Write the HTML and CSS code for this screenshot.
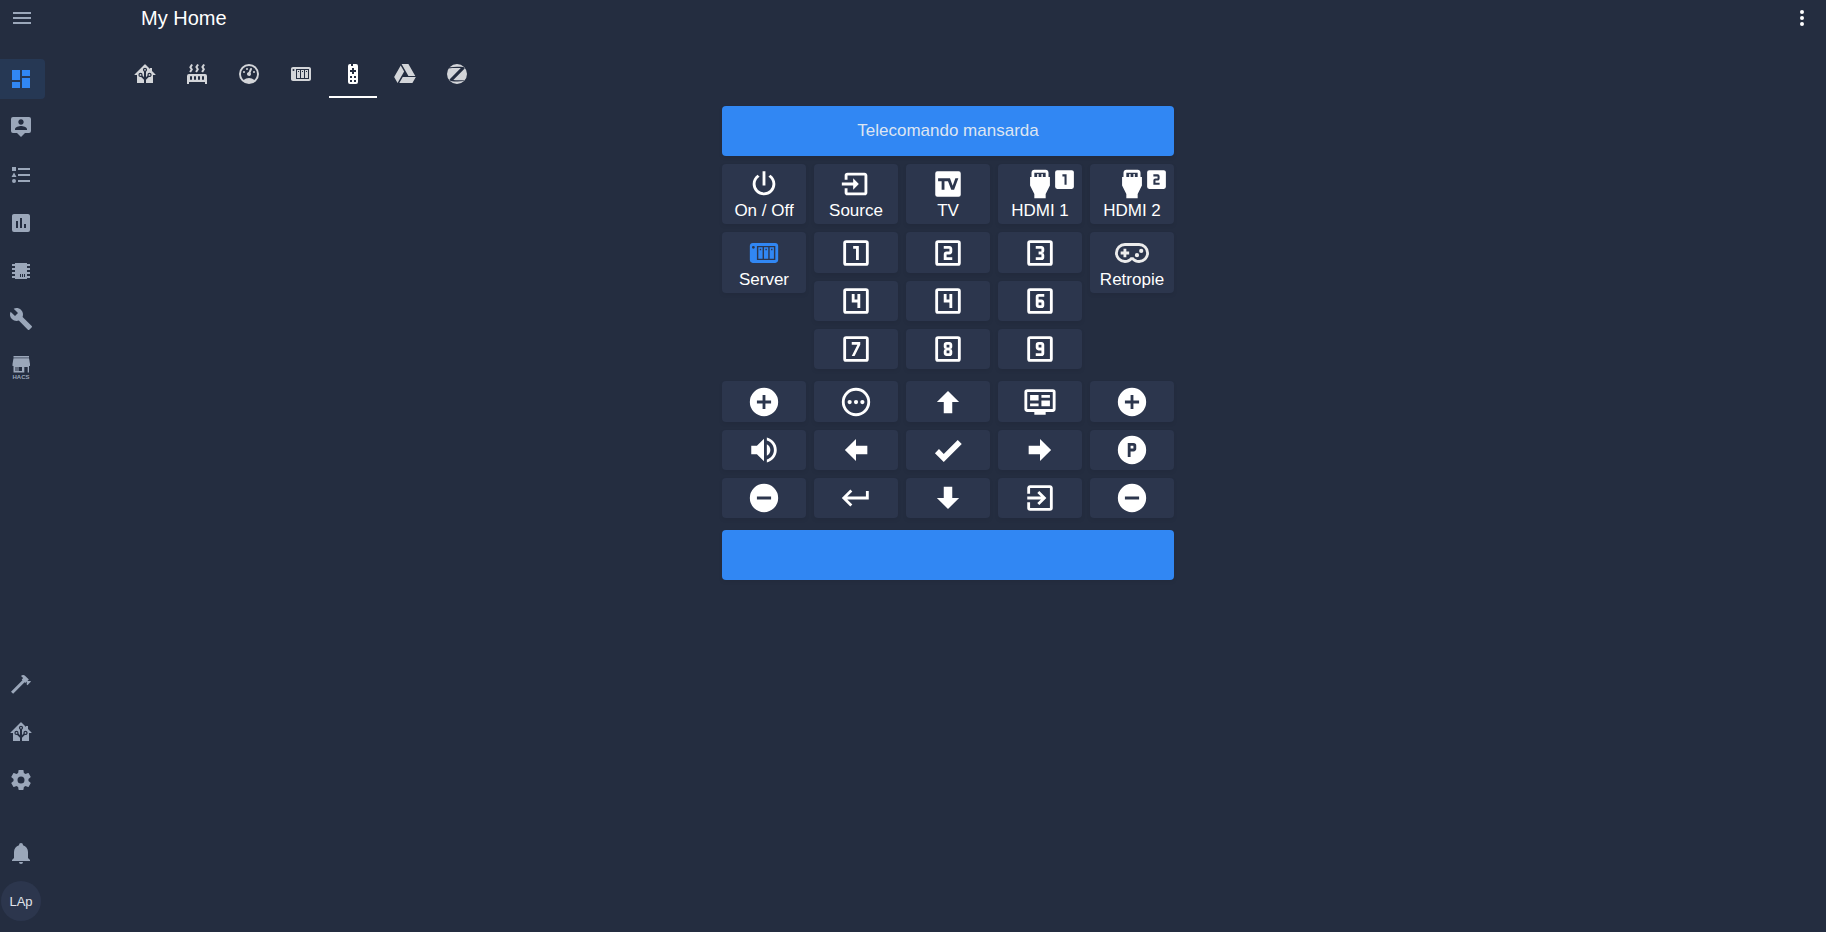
FILE: index.html
```html
<!DOCTYPE html>
<html lang="it">
<head>
<meta charset="utf-8">
<meta name="viewport" content="width=device-width, initial-scale=1">
<title>My Home</title>
<link rel="stylesheet" href="styles.css">
</head>
<body>
<svg class="defs" aria-hidden="true">
<symbol id="menu" viewBox="0 0 24 24"><path d="M3,6H21V8H3V6M3,11H21V13H3V11M3,16H21V18H3V16Z"/></symbol>
<symbol id="dots" viewBox="0 0 24 24"><path d="M12,16A2,2 0 0,1 14,18A2,2 0 0,1 12,20A2,2 0 0,1 10,18A2,2 0 0,1 12,16M12,10A2,2 0 0,1 14,12A2,2 0 0,1 12,14A2,2 0 0,1 10,12A2,2 0 0,1 12,10M12,4A2,2 0 0,1 14,6A2,2 0 0,1 12,8A2,2 0 0,1 10,6A2,2 0 0,1 12,4Z"/></symbol>
<symbol id="dashboard" viewBox="0 0 24 24"><path d="M13,3V9H21V3M13,21H21V11H13M3,21H11V15H3M3,13H11V3H3V13Z"/></symbol>
<symbol id="person" viewBox="0 0 24 24"><path d="M20,2H4A2,2 0 0,0 2,4V16A2,2 0 0,0 4,18H8L12,22L16,18H20A2,2 0 0,0 22,16V4A2,2 0 0,0 20,2M12,4.3C13.5,4.3 14.7,5.5 14.7,7C14.7,8.5 13.5,9.7 12,9.7C10.5,9.7 9.3,8.5 9.3,7C9.3,5.5 10.5,4.3 12,4.3M18,15H6V14.1C6,12.1 10,11 12,11C14,11 18,12.1 18,14.1V15Z"/></symbol>
<symbol id="list" viewBox="0 0 24 24"><path d="M5,9.5L7.5,14H2.5L5,9.5M3,4H7V8H3V4M5,20A2,2 0 0,0 7,18A2,2 0 0,0 5,16A2,2 0 0,0 3,18A2,2 0 0,0 5,20M9,5V7H21V5H9M9,19H21V17H9V19M9,13H21V11H9V13Z"/></symbol>
<symbol id="chart" viewBox="0 0 24 24"><path d="M17,17H15V13H17M13,17H11V7H13M9,17H7V10H9M19,3H5C3.89,3 3,3.89 3,5V19A2,2 0 0,0 5,21H19A2,2 0 0,0 21,19V5C21,3.89 20.1,3 19,3Z"/></symbol>
<symbol id="chip" viewBox="0 0 24 24"><path d="M6,4H18V5H21V7H18V9H21V11H18V13H21V15H18V17H21V19H18V20H6V19H3V17H6V15H3V13H6V11H3V9H6V7H3V5H6V4M11,15V18H12V15H11M13,15V18H14V15H13M15,15V18H16V15H15Z"/></symbol>
<symbol id="wrench" viewBox="0 0 24 24"><path d="M22.7,19L13.6,9.9C14.5,7.6 14,4.9 12.1,3C10.1,1 7.1,0.6 4.7,1.7L9,6L6,9L1.6,4.7C0.4,7.1 0.9,10.1 2.9,12.1C4.8,14 7.5,14.5 9.8,13.6L18.9,22.7C19.3,23.1 19.9,23.1 20.3,22.7L22.6,20.4C23.1,20 23.1,19.3 22.7,19Z"/></symbol>
<symbol id="hammer" viewBox="0 0 24 24"><path d="M2,19.630L13.430,8.200L12.720,7.500L14.140,6.070L12,3.890C13.200,2.700 15.090,2.700 16.270,3.890L19.870,7.500L18.450,8.910H21.290L22,9.620L18.450,13.210L17.740,12.500V9.620L16.270,11.040L15.560,10.330L4.130,21.760L2,19.630Z"/></symbol>
<symbol id="house" viewBox="0 0 24 24"><path fill-rule="evenodd" d="M21.800,13H20V21H13V17.670L15.790,14.880L16.500,15C17.660,15 18.600,14.060 18.600,12.900C18.600,11.740 17.660,10.800 16.500,10.800A2.100,2.100 0 0,0 14.400,12.900L14.500,13.610L13,15.130V9.650C13.660,9.290 14.100,8.600 14.100,7.800A2.100,2.100 0 0,0 12,5.700A2.100,2.100 0 0,0 9.900,7.800C9.900,8.600 10.340,9.290 11,9.650V15.130L9.500,13.610L9.600,12.900A2.100,2.100 0 0,0 7.500,10.800A2.100,2.100 0 0,0 5.400,12.900A2.100,2.100 0 0,0 7.500,15L8.210,14.880L11,17.670V21H4V13H2.250C1.830,13 1.420,13 1.420,12.790C1.430,12.570 1.850,12.150 2.280,11.720L11,3C11.330,2.670 11.670,2.330 12,2.330C12.330,2.330 12.670,2.670 13,3L17,7V6H19V9L21.780,11.780C22.180,12.180 22.590,12.590 22.600,12.800C22.600,13 22.200,13 21.800,13M7.500,12A0.900,0.900 0 0,1 8.400,12.900A0.900,0.900 0 0,1 7.500,13.800A0.900,0.900 0 0,1 6.600,12.900A0.900,0.900 0 0,1 7.500,12M16.500,12C17,12 17.400,12.400 17.400,12.900C17.400,13.400 17,13.800 16.500,13.800A0.900,0.900 0 0,1 15.600,12.900A0.900,0.900 0 0,1 16.500,12M12,6.900C12.500,6.900 12.900,7.300 12.900,7.800C12.900,8.300 12.500,8.700 12,8.700C11.500,8.700 11.100,8.300 11.100,7.800C11.100,7.300 11.500,6.900 12,6.900Z"/></symbol>
<symbol id="cog" viewBox="0 0 24 24"><path d="M12,15.500A3.500,3.500 0 0,1 8.500,12A3.500,3.500 0 0,1 12,8.500A3.500,3.500 0 0,1 15.500,12A3.500,3.500 0 0,1 12,15.500M19.430,12.970C19.470,12.650 19.500,12.330 19.500,12C19.500,11.670 19.470,11.340 19.430,11L21.540,9.370C21.730,9.220 21.780,8.950 21.660,8.730L19.660,5.270C19.540,5.050 19.270,4.960 19.050,5.050L16.560,6.050C16.040,5.660 15.500,5.320 14.870,5.070L14.500,2.420C14.460,2.180 14.250,2 14,2H10C9.750,2 9.540,2.180 9.500,2.420L9.130,5.070C8.500,5.320 7.960,5.660 7.440,6.050L4.950,5.050C4.730,4.960 4.460,5.050 4.340,5.270L2.340,8.730C2.210,8.950 2.270,9.220 2.460,9.370L4.570,11C4.530,11.340 4.500,11.670 4.500,12C4.500,12.330 4.530,12.650 4.570,12.970L2.460,14.630C2.270,14.780 2.210,15.050 2.340,15.270L4.340,18.730C4.460,18.950 4.730,19.030 4.950,18.950L7.440,17.940C7.960,18.340 8.500,18.680 9.130,18.930L9.500,21.580C9.540,21.820 9.750,22 10,22H14C14.250,22 14.460,21.820 14.500,21.580L14.870,18.930C15.500,18.670 16.040,18.340 16.560,17.940L19.050,18.950C19.270,19.030 19.540,18.950 19.660,18.730L21.660,15.270C21.780,15.050 21.730,14.780 21.540,14.630L19.430,12.970Z"/></symbol>
<symbol id="bell" viewBox="0 0 24 24"><path d="M21,19V20H3V19L5,17V11C5,7.900 7.030,5.170 10,4.290C10,4.190 10,4.100 10,4A2,2 0 0,1 12,2A2,2 0 0,1 14,4C14,4.100 14,4.190 14,4.290C16.970,5.170 19,7.900 19,11V17L21,19M14,21A2,2 0 0,1 12,23A2,2 0 0,1 10,21"/></symbol>
<symbol id="radiator" viewBox="0 0 24 24"><path d="M7.950,3L6.530,5.190L7.950,7.400H7.940L5.950,10.500L4.220,9.600L5.640,7.390L4.220,5.190L6.220,2.090L7.950,3M13.950,2.890L12.530,5.100L13.950,7.300L13.940,7.310L11.950,10.400L10.220,9.500L11.640,7.300L10.220,5.100L12.220,2L13.950,2.890M20,2.890L18.560,5.100L20,7.300V7.310L18,10.400L16.250,9.500L17.670,7.300L16.250,5.100L18.250,2L20,2.890M2,22V14A2,2 0 0,1 4,12H20A2,2 0 0,1 22,14V22H20V20H4V22H2M6,14A1,1 0 0,0 5,15V17A1,1 0 0,0 6,18A1,1 0 0,0 7,17V15A1,1 0 0,0 6,14M10,14A1,1 0 0,0 9,15V17A1,1 0 0,0 10,18A1,1 0 0,0 11,17V15A1,1 0 0,0 10,14M14,14A1,1 0 0,0 13,15V17A1,1 0 0,0 14,18A1,1 0 0,0 15,17V15A1,1 0 0,0 14,14M18,14A1,1 0 0,0 17,15V17A1,1 0 0,0 18,18A1,1 0 0,0 19,17V15A1,1 0 0,0 18,14Z"/></symbol>
<symbol id="gauge" viewBox="0 0 24 24"><path d="M12,2A10,10 0 0,0 2,12A10,10 0 0,0 12,22A10,10 0 0,0 22,12A10,10 0 0,0 12,2M12,4A8,8 0 0,1 20,12C20,14.400 19,16.500 17.300,18C15.900,16.700 14,16 12,16C10,16 8.200,16.700 6.700,18C5,16.500 4,14.400 4,12A8,8 0 0,1 12,4M14,5.890C13.620,5.900 13.260,6.150 13.100,6.540L11.810,9.770L11.710,10C11,10.130 10.410,10.600 10.140,11.260C9.730,12.290 10.230,13.450 11.260,13.860C12.290,14.270 13.450,13.770 13.860,12.740C14.120,12.080 14,11.320 13.570,10.760L13.670,10.500L14.960,7.290L14.970,7.260C15.170,6.750 14.920,6.170 14.410,5.960C14.280,5.910 14.150,5.890 14,5.890M10,6A1,1 0 0,0 9,7A1,1 0 0,0 10,8A1,1 0 0,0 11,7A1,1 0 0,0 10,6M7,9A1,1 0 0,0 6,10A1,1 0 0,0 7,11A1,1 0 0,0 8,10A1,1 0 0,0 7,9M17,9A1,1 0 0,0 16,10A1,1 0 0,0 17,11A1,1 0 0,0 18,10A1,1 0 0,0 17,9Z"/></symbol>
<symbol id="nas" viewBox="0 0 24 24"><path d="M4,5C2.890,5 2,5.890 2,7V17C2,18.110 2.890,19 4,19H20C21.110,19 22,18.110 22,17V7C22,5.890 21.110,5 20,5H4M4.500,7A1,1 0 0,1 5.500,8A1,1 0 0,1 4.500,9A1,1 0 0,1 3.500,8A1,1 0 0,1 4.500,7M7,7H20V17H7V7M8,8V16H11V8H8M12,8V16H15V8H12M16,8V16H19V8H16M9,9H10V10H9V9M13,9H14V10H13V9M17,9H18V10H17V9Z"/></symbol>
<symbol id="remote" viewBox="0 0 24 24"><path fill-rule="evenodd" d="M9,2H10V4H12V2H15A2,2 0 0,1 17,4V20A2,2 0 0,1 15,22H9A2,2 0 0,1 7,20V4A2,2 0 0,1 9,2M11,6V8H9V10H11V12H13V10H15V8H13V6H11M9,14V16H11V14H9M13,14V16H15V14H13M9,18V20H11V18H9M13,18V20H15V18H13Z"/></symbol>
<symbol id="drive" viewBox="0 0 24 24"><path d="M7.710,3.500L1.150,15L4.580,21L11.130,9.500M9.730,15L6.300,21H19.420L22.850,15M22.280,14L15.420,2H8.580L8.570,2L15.430,14H22.280Z"/></symbol>
<symbol id="zigbee" viewBox="0 0 24 24"><path fill-rule="evenodd" d="M12,2A10,10 0 1,1 12,22A10,10 0 1,1 12,2M4.700,5.200L3.700,6.500C7,6 11,5.900 15.800,6.100L4.500,17.600L5.600,19C10,19.700 14.500,19.700 18.900,19.100L19.900,17.900C16.500,18.400 12,18.500 8.300,18L19.700,6.400L18.600,5C14,4.500 9,4.500 4.700,5.200Z"/></symbol>
<symbol id="power" viewBox="0 0 24 24"><path d="M16.560,5.440L15.110,6.890C16.840,7.940 18,9.830 18,12A6,6 0 0,1 12,18A6,6 0 0,1 6,12C6,9.830 7.160,7.940 8.880,6.880L7.440,5.440C5.360,6.880 4,9.280 4,12A8,8 0 0,0 12,20A8,8 0 0,0 20,12C20,9.280 18.640,6.880 16.560,5.440M13,3H11V13H13"/></symbol>
<symbol id="import" viewBox="0 0 24 24"><path d="M14,12L10,8V11H2V13H10V16M20,18V6C20,4.890 19.100,4 18,4H6A2,2 0 0,0 4,6V9H6V6H18V18H6V15H4V18A2,2 0 0,0 6,20H18A2,2 0 0,0 20,18Z"/></symbol>
<symbol id="tv" viewBox="0 0 24 24"><path fill-rule="evenodd" d="M4.500,3H19.500A1.500,1.500 0 0,1 21,4.500V19.500A1.500,1.500 0 0,1 19.500,21H4.500A1.500,1.500 0 0,1 3,19.500V4.500A1.500,1.500 0 0,1 4.500,3M5,8V10H7.500V16H9.500V10H12L14.300,16H16.300L19.300,8H17.200L15.300,13.300L13.400,8Z"/></symbol>
<symbol id="hdmi" viewBox="0 0 24 24"><path d="M18,7V4C18,2.900 17.100,2 16,2H8C6.900,2 6,2.900 6,4V7H5V13L8,19V22H16V19L19,13V7H18M8,4H16V7H14V5H13V7H11V5H10V7H8V4Z"/></symbol>
<symbol id="box1" viewBox="0 0 24 24"><path d="M14,17H12V9H10V7H14M19,3H5A2,2 0 0,0 3,5V19A2,2 0 0,0 5,21H19A2,2 0 0,0 21,19V5C21,3.890 20.100,3 19,3Z"/></symbol>
<symbol id="box2" viewBox="0 0 24 24"><path d="M15,11C15,12.110 14.100,13 13,13H11V15H15V17H9V13C9,11.890 9.900,11 11,11H13V9H9V7H13A2,2 0 0,1 15,9M19,3H5A2,2 0 0,0 3,5V19A2,2 0 0,0 5,21H19A2,2 0 0,0 21,19V5C21,3.890 20.100,3 19,3Z"/></symbol>
<symbol id="frame" viewBox="0 0 24 24"><path fill-rule="evenodd" d="M5,3H19A2,2 0 0,1 21,5V19A2,2 0 0,1 19,21H5A2,2 0 0,1 3,19V5A2,2 0 0,1 5,3M5,5V19H19V5Z"/></symbol>
<symbol id="n1" viewBox="0 0 24 24"><use href="#frame"/><path d="M12,17H14V7H10V9H12"/></symbol>
<symbol id="n2" viewBox="0 0 24 24"><use href="#frame"/><path d="M15,15H11V13H13A2,2 0 0,0 15,11V9C15,7.890 14.100,7 13,7H9V9H13V11H11A2,2 0 0,0 9,13V17H15"/></symbol>
<symbol id="n3" viewBox="0 0 24 24"><use href="#frame"/><path d="M15,15V13.500A1.500,1.500 0 0,0 13.500,12A1.500,1.500 0 0,0 15,10.500V9C15,7.890 14.100,7 13,7H9V9H13V11H11V13H13V15H9V17H13A2,2 0 0,0 15,15"/></symbol>
<symbol id="n4" viewBox="0 0 24 24"><use href="#frame"/><path d="M13,17H15V7H13V11H11V7H9V13H13"/></symbol>
<symbol id="n6" viewBox="0 0 24 24"><use href="#frame"/><path d="M11,13H13V15H11M11,17H13A2,2 0 0,0 15,15V13C15,11.890 14.100,11 13,11H11V9H15V7H11A2,2 0 0,0 9,9V15C9,16.110 9.900,17 11,17" fill-rule="evenodd"/></symbol>
<symbol id="n7" viewBox="0 0 24 24"><use href="#frame"/><path d="M11,17L15,9V7H9V9H13L9,17"/></symbol>
<symbol id="n8" viewBox="0 0 24 24"><use href="#frame"/><path fill-rule="evenodd" d="M11,13H13V15H11M11,9H13V11H11M11,17H13A2,2 0 0,0 15,15V13.500A1.500,1.500 0 0,0 13.500,12A1.500,1.500 0 0,0 15,10.500V9C15,7.890 14.100,7 13,7H11A2,2 0 0,0 9,9V10.500A1.500,1.500 0 0,0 10.500,12A1.500,1.500 0 0,0 9,13.500V15C9,16.110 9.900,17 11,17"/></symbol>
<symbol id="n9" viewBox="0 0 24 24"><use href="#frame"/><path fill-rule="evenodd" d="M13,11H11V9H13M13,7H11A2,2 0 0,0 9,9V11C9,12.110 9.900,13 11,13H13V15H9V17H13A2,2 0 0,0 15,15V9C15,7.890 14.100,7 13,7"/></symbol>
<symbol id="pad" viewBox="0 0 24 24"><path d="M6,9H8V11H10V13H8V15H6V13H4V11H6V9M18.500,9A1.500,1.500 0 0,1 20,10.500A1.500,1.500 0 0,1 18.500,12A1.500,1.500 0 0,1 17,10.500A1.500,1.500 0 0,1 18.500,9M15.500,12A1.500,1.500 0 0,1 17,13.500A1.500,1.500 0 0,1 15.500,15A1.500,1.500 0 0,1 14,13.500A1.500,1.500 0 0,1 15.500,12M17,5A7,7 0 0,1 24,12A7,7 0 0,1 17,19C15.040,19 13.270,18.200 12,16.900C10.730,18.200 8.960,19 7,19A7,7 0 0,1 0,12A7,7 0 0,1 7,5H17M7,7A5,5 0 0,0 2,12A5,5 0 0,0 7,17C8.640,17 10.090,16.210 11,15H13C13.910,16.210 15.360,17 17,17A5,5 0 0,0 22,12A5,5 0 0,0 17,7H7Z"/></symbol>
<symbol id="plus" viewBox="0 0 24 24"><path d="M17,13H13V17H11V13H7V11H11V7H13V11H17M12,2A10,10 0 0,0 2,12A10,10 0 0,0 12,22A10,10 0 0,0 22,12A10,10 0 0,0 12,2Z"/></symbol>
<symbol id="minus" viewBox="0 0 24 24"><path d="M17,13H7V11H17M12,2A10,10 0 0,0 2,12A10,10 0 0,0 12,22A10,10 0 0,0 22,12A10,10 0 0,0 12,2Z"/></symbol>
<symbol id="more" viewBox="0 0 24 24"><path fill-rule="evenodd" d="M12,2A10,10 0 1,1 12,22A10,10 0 1,1 12,2M12,4A8,8 0 1,0 12,20A8,8 0 1,0 12,4Z"/><circle cx="7.500" cy="12" r="1.500"/><circle cx="12" cy="12" r="1.500"/><circle cx="16.500" cy="12" r="1.500"/></symbol>
<symbol id="up" viewBox="0 0 24 24"><path d="M15,20H9V12H4.160L12,4.160L19.840,12H15V20Z"/></symbol>
<symbol id="down" viewBox="0 0 24 24"><path d="M9,4H15V12H19.840L12,19.840L4.160,12H9V4Z"/></symbol>
<symbol id="left" viewBox="0 0 24 24"><path d="M20,9V15H12V19.840L4.160,12L12,4.160V9H20Z"/></symbol>
<symbol id="right" viewBox="0 0 24 24"><path d="M4,15V9H12V4.160L19.840,12L12,19.840V15H4Z"/></symbol>
<symbol id="check" viewBox="0 0 24 24"><path d="M9,20.420L2.790,14.210L5.620,11.380L9,14.770L18.880,4.880L21.710,7.710L9,20.420Z"/></symbol>
<symbol id="guide" viewBox="0 0 24 24"><path d="M21,17V5H3V17H21M21,3A2,2 0 0,1 23,5V17A2,2 0 0,1 21,19H16V21H8V19H3A2,2 0 0,1 1,17V5A2,2 0 0,1 3,3H21M5,7H11V11H5V7M5,13H11V15H5V13M13,7H19V9H13V7M13,11H19V15H13V11Z"/></symbol>
<symbol id="volume" viewBox="0 0 24 24"><path d="M14,3.230V5.290C16.890,6.150 19,8.830 19,12C19,15.170 16.890,17.840 14,18.700V20.770C18,19.860 21,16.280 21,12C21,7.720 18,4.140 14,3.230M16.500,12C16.500,10.230 15.500,8.710 14,7.970V16C15.500,15.290 16.500,13.760 16.500,12M3,9V15H7L12,20V4L7,9H3Z"/></symbol>
<symbol id="parking" viewBox="0 0 24 24"><path fill-rule="evenodd" d="M12,2A10,10 0 1,1 12,22A10,10 0 1,1 12,2M9,7V17H11V13H13A2,2 0 0,0 15,11V9A2,2 0 0,0 13,7ZM11,9H13V11H11Z"/></symbol>
<symbol id="return" viewBox="0 0 24 24"><path d="M19,7V11H5.830L9.410,7.410L8,6L2,12L8,18L9.410,16.580L5.830,13H21V7H19Z"/></symbol>
<symbol id="exit" viewBox="0 0 24 24"><path d="M19,3H5C3.890,3 3,3.890 3,5V9H5V5H19V19H5V15H3V19A2,2 0 0,0 5,21H19A2,2 0 0,0 21,19V5C21,3.890 20.100,3 19,3M10.080,15.580L11.500,17L16.500,12L11.500,7L10.080,8.410L12.670,11H3V13H12.670L10.080,15.580Z"/></symbol>
</svg>

<div class="app">
  <aside class="sidebar">
    <button class="menu-button" aria-label="Menu"><svg class="icon"><use href="#menu"/></svg></button>
    <nav class="side-nav" aria-label="Main">
      <a class="side-link active" href="#" aria-label="Overview"><svg class="icon"><use href="#dashboard"/></svg></a>
      <a class="side-link" href="#" aria-label="Map"><svg class="icon"><use href="#person"/></svg></a>
      <a class="side-link" href="#" aria-label="Logbook"><svg class="icon"><use href="#list"/></svg></a>
      <a class="side-link" href="#" aria-label="History"><svg class="icon"><use href="#chart"/></svg></a>
      <a class="side-link" href="#" aria-label="ESPHome"><svg class="icon"><use href="#chip"/></svg></a>
      <a class="side-link" href="#" aria-label="Configurator"><svg class="icon"><use href="#wrench"/></svg></a>
      <a class="side-link" href="#"><svg class="icon store" viewBox="0 0 24 24"><path d="M4.500,1H20V2.600H4.500Z"/><path d="M4.500,3.200H20L21,9V11H3.500V9Z"/><path fill-rule="evenodd" d="M4.500,11H20V17.500H18.700V12H15.300V17.500H4.500ZM6,12V16H13V12Z"/><path opacity="0.500" d="M6,12H10V16H6Z"/><text x="12" y="24" text-anchor="middle">HACS</text></svg></a>
    </nav>
    <nav class="side-nav tools" aria-label="Tools">
      <a class="side-link" href="#" aria-label="Developer tools"><svg class="icon"><use href="#hammer"/></svg></a>
      <a class="side-link" href="#" aria-label="Supervisor"><svg class="icon"><use href="#house"/></svg></a>
      <a class="side-link" href="#" aria-label="Settings"><svg class="icon"><use href="#cog"/></svg></a>
    </nav>
    <div class="account">
      <button class="side-link" aria-label="Notifications"><svg class="icon"><use href="#bell"/></svg></button>
      <a class="avatar" href="#">LAp</a>
    </div>
  </aside>

  <div class="page">
    <header class="toolbar">
      <h1 class="title">My Home</h1>
      <button class="more-button" aria-label="More options"><svg class="icon"><use href="#dots"/></svg></button>
    </header>
    <nav class="tabs" aria-label="Views">
      <a class="tab" href="#" aria-label="Home"><svg class="icon"><use href="#house"/></svg></a>
      <a class="tab" href="#" aria-label="Heating"><svg class="icon"><use href="#radiator"/></svg></a>
      <a class="tab" href="#" aria-label="Gauges"><svg class="icon"><use href="#gauge"/></svg></a>
      <a class="tab" href="#" aria-label="Server"><svg class="icon"><use href="#nas"/></svg></a>
      <a class="tab current" href="#" aria-label="Remote" aria-current="page"><svg class="icon"><use href="#remote"/></svg></a>
      <a class="tab" href="#" aria-label="Drive"><svg class="icon"><use href="#drive"/></svg></a>
      <a class="tab" href="#" aria-label="Zigbee"><svg class="icon"><use href="#zigbee"/></svg></a>
    </nav>

    <main class="remote">
      <h2 class="banner">Telecomando mansarda</h2>
      <div class="sources">
        <button class="key"><svg class="glyph"><use href="#power"/></svg><span>On / Off</span></button>
        <button class="key"><svg class="glyph"><use href="#import"/></svg><span>Source</span></button>
        <button class="key"><svg class="glyph"><use href="#tv"/></svg><span>TV</span></button>
        <button class="key"><svg class="glyph"><use href="#hdmi"/></svg><span>HDMI 1</span><svg class="badge"><use href="#box1"/></svg></button>
        <button class="key"><svg class="glyph"><use href="#hdmi"/></svg><span>HDMI 2</span><svg class="badge"><use href="#box2"/></svg></button>
      </div>
      <div class="pad digits">
        <button class="key tall"><svg class="glyph accent"><use href="#nas"/></svg><span>Server</span></button>
        <button class="key" aria-label="1"><svg class="glyph"><use href="#n1"/></svg></button>
        <button class="key" aria-label="2"><svg class="glyph"><use href="#n2"/></svg></button>
        <button class="key" aria-label="3"><svg class="glyph"><use href="#n3"/></svg></button>
        <button class="key tall"><svg class="glyph muted"><use href="#pad"/></svg><span>Retropie</span></button>
        <button class="key" aria-label="4"><svg class="glyph"><use href="#n4"/></svg></button>
        <button class="key" aria-label="5"><svg class="glyph"><use href="#n4"/></svg></button>
        <button class="key" aria-label="6"><svg class="glyph"><use href="#n6"/></svg></button>
        <button class="key" aria-label="7"><svg class="glyph"><use href="#n7"/></svg></button>
        <button class="key" aria-label="8"><svg class="glyph"><use href="#n8"/></svg></button>
        <button class="key" aria-label="9"><svg class="glyph"><use href="#n9"/></svg></button>
      </div>
      <div class="pad">
        <button class="key" aria-label="Volume up"><svg class="glyph"><use href="#plus"/></svg></button>
        <button class="key" aria-label="More"><svg class="glyph"><use href="#more"/></svg></button>
        <button class="key" aria-label="Up"><svg class="glyph"><use href="#up"/></svg></button>
        <button class="key" aria-label="Guide"><svg class="glyph"><use href="#guide"/></svg></button>
        <button class="key" aria-label="Channel up"><svg class="glyph"><use href="#plus"/></svg></button>
        <button class="key" aria-label="Mute"><svg class="glyph"><use href="#volume"/></svg></button>
        <button class="key" aria-label="Left"><svg class="glyph"><use href="#left"/></svg></button>
        <button class="key" aria-label="OK"><svg class="glyph"><use href="#check"/></svg></button>
        <button class="key" aria-label="Right"><svg class="glyph"><use href="#right"/></svg></button>
        <button class="key" aria-label="Channels"><svg class="glyph"><use href="#parking"/></svg></button>
        <button class="key" aria-label="Volume down"><svg class="glyph"><use href="#minus"/></svg></button>
        <button class="key" aria-label="Back"><svg class="glyph"><use href="#return"/></svg></button>
        <button class="key" aria-label="Down"><svg class="glyph"><use href="#down"/></svg></button>
        <button class="key" aria-label="Exit"><svg class="glyph"><use href="#exit"/></svg></button>
        <button class="key" aria-label="Channel down"><svg class="glyph"><use href="#minus"/></svg></button>
      </div>
      <div class="banner"></div>
    </main>
  </div>
</div>
</body>
</html>
```
FILE: styles.css
```css
* { box-sizing: border-box; }

body {
  margin: 0;
  background: #242d40;
  color: #fff;
  font-family: "Liberation Sans", Arial, sans-serif;
}

button {
  padding: 0;
  border: 0;
  background: none;
  color: inherit;
  font: inherit;
  cursor: pointer;
}

a { color: inherit; text-decoration: none; }

svg { display: block; fill: currentColor; }

.defs { position: absolute; width: 0; height: 0; }

.icon { width: 24px; height: 24px; flex: none; overflow: visible; }

.store text { font: bold 6px "Liberation Sans", Arial, sans-serif; }

.app { display: flex; min-height: 100vh; }

.sidebar {
  display: flex;
  flex: none;
  flex-direction: column;
  width: 70px;
  padding-bottom: 11px;
  color: #9ba7ba;
}

.menu-button { margin: 6px 0 0 10px; width: 24px; }

.side-nav {
  display: flex;
  flex-direction: column;
  gap: 8px;
  margin-top: 29px;
}

.side-nav.tools { margin-top: auto; }

.side-link {
  display: flex;
  align-items: center;
  width: 45px;
  height: 40px;
  padding-left: 9px;
  border-radius: 0 4px 4px 0;
}

.side-link.active { background: #263854; color: #3187f3; }

.account {
  display: flex;
  flex-direction: column;
  gap: 8px;
  margin-top: 33px;
}

.avatar {
  display: grid;
  place-items: center;
  width: 40px;
  height: 40px;
  margin-left: 1px;
  border-radius: 50%;
  background: #2c364d;
  color: #e1e4ea;
  font-size: 13px;
}

.page { flex: 1; min-width: 0; }

.toolbar {
  display: flex;
  align-items: center;
  justify-content: space-between;
  height: 36px;
  padding: 0 12px 0 71px;
}

.title { margin: 0; font-size: 20px; font-weight: 400; }

.tabs {
  display: flex;
  gap: 4px;
  padding: 14px 0 0 51px;
}

.tab {
  display: grid;
  place-items: center;
  width: 48px;
  height: 48px;
  border-top: 2px solid transparent;
  border-bottom: 2px solid transparent;
  color: #d3d5d9;
}

.tab.current { border-bottom-color: #fff; color: #fff; }

.remote {
  display: flex;
  flex-direction: column;
  gap: 12px;
  max-width: 452px;
  margin: 8px auto 0;
}

.banner {
  display: grid;
  place-items: center;
  min-height: 50px;
  margin: 0;
  border-radius: 4px;
  background: #3187f3;
  color: #dde5f2;
  font-size: 17px;
  font-weight: 400;
  box-shadow: 0 2px 4px #0001;
}

.sources,
.pad {
  display: grid;
  grid-template-columns: repeat(5, 1fr);
  gap: 8px;
}

.sources { margin: -4px 0; }

.pad { grid-template-rows: 41px 40px 40px; }

.key {
  position: relative;
  display: flex;
  flex-direction: column;
  align-items: center;
  justify-content: center;
  border-radius: 4px;
  background: #2c364d;
  font-size: 17px;
  line-height: 20px;
  box-shadow: 0 2px 4px #0001;
}

.sources .key { height: 60px; }

.digits .tall { grid-row: 1 / 4; align-self: start; height: 61px; }
.digits .tall:first-child { grid-column: 1; }
.digits .tall:not(:first-child) { grid-column: 5; }

.glyph { width: 34px; height: 34px; flex: none; }
.glyph.accent { color: #3187f3; }
.glyph.muted { color: #ececec; }

.badge {
  position: absolute;
  top: 3px;
  right: 5px;
  width: 25px;
  height: 25px;
}
```
